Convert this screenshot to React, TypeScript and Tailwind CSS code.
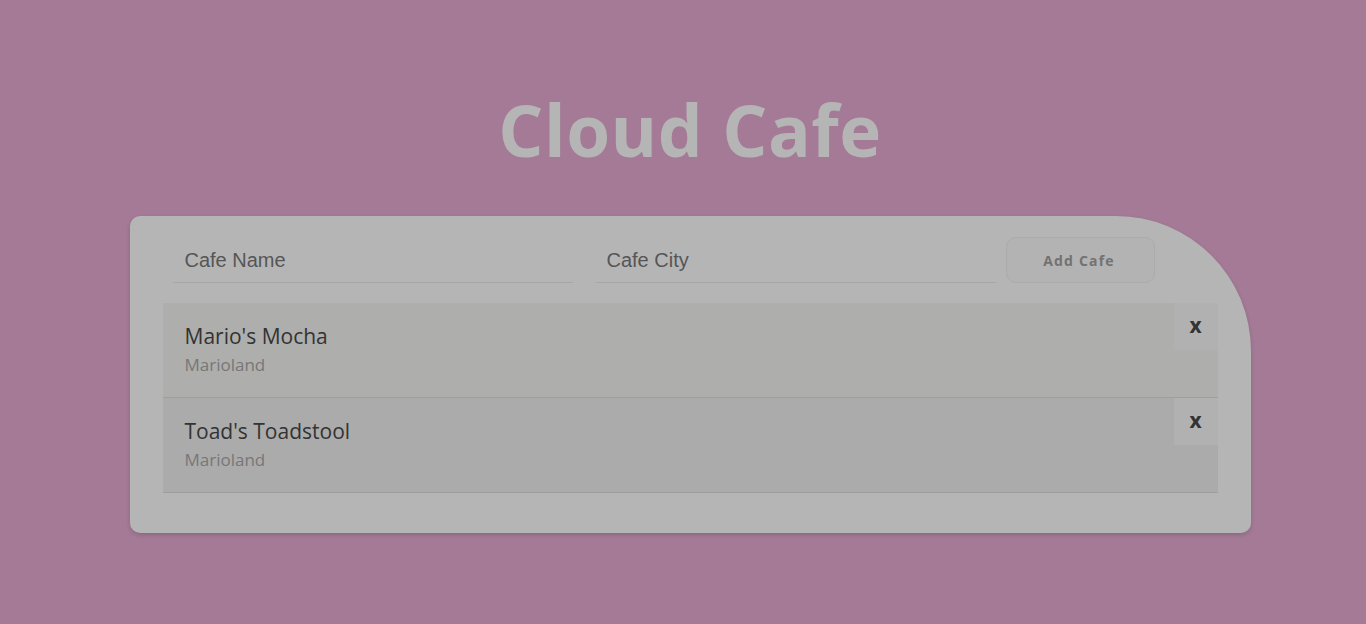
import React from "react";

const cafes = [
  { name: "Mario's Mocha", city: "Marioland", bg: "bg-[#aeaead]" },
  { name: "Toad's Toadstool", city: "Marioland", bg: "bg-[#ababab]" },
];

export default function App() {
  return (
    <div
      className="min-h-screen w-full bg-[#a47a96] flex flex-col items-center pl-[14px]"
      style={{ fontFamily: "'Open Sans', 'Noto Sans', sans-serif" }}
    >
      <h1 className="mt-[86px] text-[71px] leading-[88px] font-bold text-[#b5b5b5] tracking-[0.5px]">
        Cloud Cafe
      </h1>
      <div className="mt-[42px] w-[1121px] bg-[#b5b5b5] rounded-[10px] rounded-tr-[135px] shadow-[0_2px_4px_rgba(0,0,0,0.15)] px-[33px] pt-[22px] pb-[40px]">
        <form className="flex items-end h-[45px] mb-[20px]" onSubmit={(e) => e.preventDefault()}>
          <input
            placeholder="Cafe Name"
            className="ml-[10px] w-[400px] h-[45px] bg-transparent border-b border-[#a6a6a6] px-[12px] text-[20px] text-[#444] placeholder:text-[#555] outline-none"
            style={{ fontFamily: "'Liberation Sans', Arial, sans-serif" }}
          />
          <input
            placeholder="Cafe City"
            className="ml-[23px] w-[400px] h-[45px] bg-transparent border-b border-[#a6a6a6] px-[11px] text-[20px] text-[#444] placeholder:text-[#555] outline-none"
            style={{ fontFamily: "'Liberation Sans', Arial, sans-serif" }}
          />
          <button
            type="submit"
            className="ml-[10px] w-[149px] h-[46px] rounded-[10px] border border-[#ababab] bg-[#b3b3b3] text-[14px] font-bold tracking-[1.2px] text-[#727272] pr-[2px]"
          >
            Add Cafe
          </button>
        </form>
        <ul>
          {cafes.map((c) => (
            <li
              key={c.name}
              className={`relative ${c.bg} border-b border-[#9e9e9e] px-[22px] pt-[18px] pb-[20px]`}
            >
              <div className="text-[21px] leading-[30px] text-[#333]">{c.name}</div>
              <div className="mt-[2px] text-[17px] leading-[24px] text-[#777]">{c.city}</div>
              <button className="absolute top-0 right-0 w-[44px] h-[47px] bg-[#b1b1b1] text-[21px] font-bold text-[#333] leading-none pb-[2px]">
                x
              </button>
            </li>
          ))}
        </ul>
      </div>
    </div>
  );
}
